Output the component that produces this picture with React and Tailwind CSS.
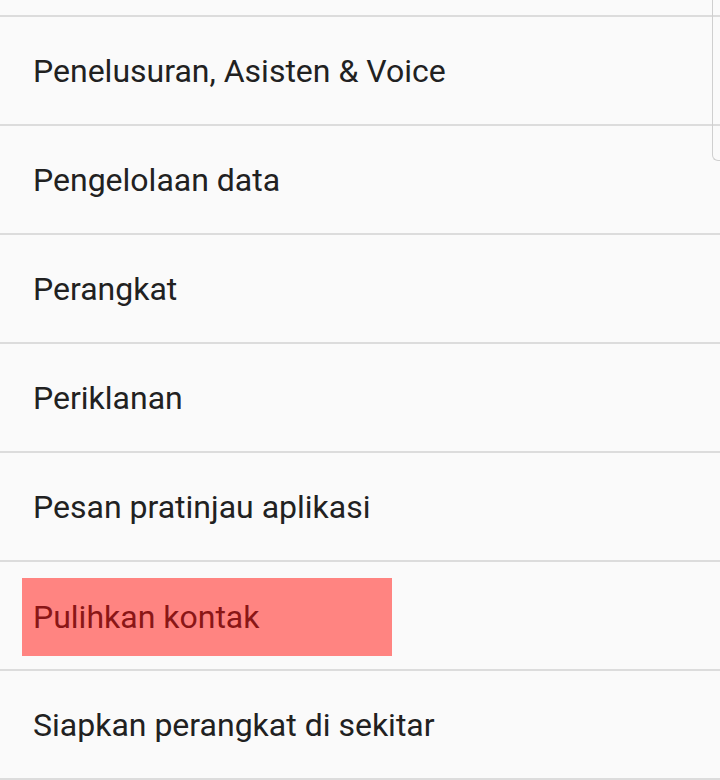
const items = [
  'Penelusuran, Asisten & Voice',
  'Pengelolaan data',
  'Perangkat',
  'Periklanan',
  'Pesan pratinjau aplikasi',
  'Pulihkan kontak',
  'Siapkan perangkat di sekitar',
];

export default function App() {
  return (
    <div
      className="relative w-[720px] h-[780px] overflow-hidden bg-[#fafafa]"
      style={{ fontFamily: 'Roboto, "Noto Sans", sans-serif' }}
    >
      <div className="h-[15px]" />
      {items.map((label) => (
        <div key={label} className="border-t-2 border-[#dcdcdc] h-[109px] flex items-center">
          {label === 'Pulihkan kontak' ? (
            <div className="ml-[22px] mt-[3px] w-[370px] h-[78px] bg-[#ff8481] flex items-center pl-[11px]">
              <span className="text-[32px] text-[#8a1616] leading-none">{label}</span>
            </div>
          ) : (
            <span className="pl-[33px] mt-[1px] text-[32px] text-[#212121] leading-none">{label}</span>
          )}
        </div>
      ))}
      <div className="border-t-2 border-[#dcdcdc]" />
      <div className="absolute right-0 top-[-10px] w-[8px] h-[171px] border-l border-b border-[#cfcfcf] rounded-bl-[6px]" />
    </div>
  );
}
